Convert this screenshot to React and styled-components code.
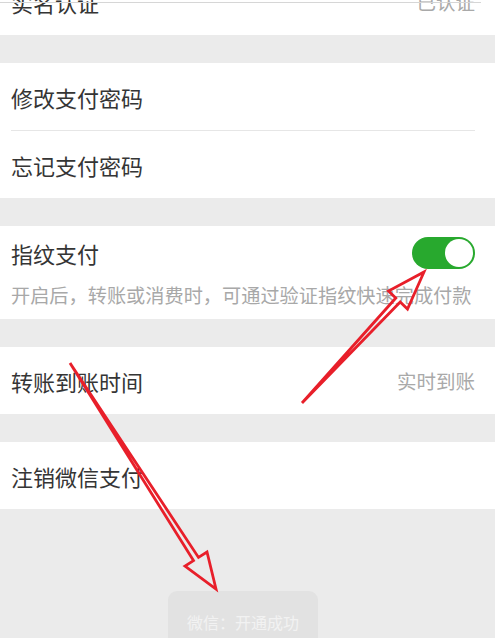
import React from "react";
import styled, { createGlobalStyle } from "styled-components";

const GlobalStyle = createGlobalStyle`
  html, body {
    margin: 0;
    padding: 0;
    background: #ebebeb;
  }
  * {
    box-sizing: border-box;
  }
`;

function App() {
  return (
    <Page>
      <GlobalStyle />
      <TopEdge />
      <Section cut>
        <Row>
          <Label>实名认证</Label>
          <Value>已认证</Value>
        </Row>
      </Section>

      <Section>
        <Row>
          <Label>修改支付密码</Label>
        </Row>
        <Divider />
        <Row>
          <Label>忘记支付密码</Label>
        </Row>
      </Section>

      <Section>
        <SwitchBlock>
          <SwitchRow>
            <Label>指纹支付</Label>
            <Toggle>
              <Knob />
            </Toggle>
          </SwitchRow>
          <Hint>开启后，转账或消费时，可通过验证指纹快速完成付款</Hint>
        </SwitchBlock>
      </Section>

      <Section>
        <Row>
          <Label>转账到账时间</Label>
          <Value>实时到账</Value>
        </Row>
      </Section>

      <Section>
        <Row>
          <Label>注销微信支付</Label>
        </Row>
      </Section>

      <ToastArea>
        <Toast>微信：开通成功</Toast>
      </ToastArea>

      <Marks viewBox="0 0 495 638" width="495" height="638">
        <polygon
          points="302,403 395.8,298 388.5,291 424,272 407.5,309 400.2,302"
          fill="none"
          stroke="#e81f2a"
          strokeWidth="2.8"
          strokeLinejoin="miter"
        />
        <polygon
          points="70,363 193.5,560.6 185,566 216,589 207,552 198.5,557.4"
          fill="none"
          stroke="#e81f2a"
          strokeWidth="2.8"
          strokeLinejoin="miter"
        />
      </Marks>
    </Page>
  );
}

export default App;

const Page = styled.div`
  position: relative;
  width: 495px;
  height: 638px;
  overflow: hidden;
  background: #ebebeb;
  display: flex;
  flex-direction: column;
  gap: 28px;
  font-family: "Noto Sans CJK SC", "Noto Sans", sans-serif;
`;

const TopEdge = styled.div`
  position: absolute;
  top: 2px;
  left: 0;
  width: 481px;
  height: 1px;
  background: #d6d6d6;
  z-index: 2;
`;

const Section = styled.div`
  background: #ffffff;
  display: flex;
  flex-direction: column;
  margin-top: ${(p) => (p.cut ? "-32px" : "0")};
`;

const Row = styled.div`
  height: 67px;
  display: flex;
  align-items: center;
  justify-content: space-between;
  padding: 0 20px 0 11px;
`;

const Label = styled.span`
  font-size: 22px;
  color: #353535;
  line-height: 1;
`;

const Value = styled.span`
  font-size: 19.5px;
  color: #a9a9a9;
  line-height: 1;
`;

const Divider = styled.div`
  height: 1px;
  margin: 0 20px 0 11px;
  background: #e6e6e6;
`;

const SwitchBlock = styled.div`
  display: flex;
  flex-direction: column;
  padding: 11px 20px 12px 11px;
`;

const SwitchRow = styled.div`
  display: flex;
  align-items: center;
  justify-content: space-between;
  height: 32px;
`;

const Toggle = styled.div`
  width: 63px;
  height: 32px;
  border-radius: 16px;
  background: #28a92e;
  display: flex;
  align-items: center;
  justify-content: flex-end;
  padding: 2px;
`;

const Knob = styled.div`
  width: 28px;
  height: 28px;
  border-radius: 50%;
  background: #ffffff;
`;

const Hint = styled.div`
  margin-top: 14px;
  font-size: 19.2px;
  line-height: 24px;
  color: #a8a8a8;
  white-space: nowrap;
`;

const ToastArea = styled.div`
  flex: 1;
  display: flex;
  justify-content: center;
  align-items: flex-start;
  padding-top: 54px;
  padding-right: 9px;
`;

const Toast = styled.div`
  width: 150px;
  height: 70px;
  border-radius: 9px;
  background: #e2e2e2;
  color: #f2f2f2;
  font-size: 16px;
  text-align: center;
  padding-top: 19px;
`;

const Marks = styled.svg`
  position: absolute;
  top: 0;
  left: 0;
  pointer-events: none;
`;
